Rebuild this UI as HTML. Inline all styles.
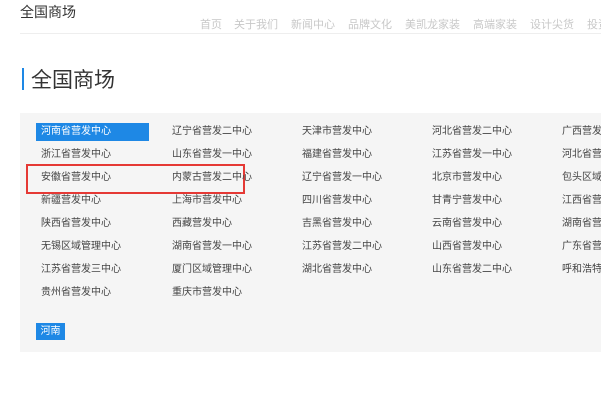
<!DOCTYPE html>
<html><head><meta charset="utf-8"><style>
html,body{margin:0;width:601px;height:401px;overflow:hidden}
body{background:#fff;font-family:"Liberation Sans","Noto Sans CJK SC",sans-serif;position:relative}
#w{position:absolute;left:0;top:0;width:601px;height:401px;overflow:hidden}
.a{position:absolute;white-space:nowrap}
.n{position:absolute;top:16px;font-size:11px;color:#c8c8c8;white-space:nowrap}
.c{position:absolute;font-size:10px;color:#444;white-space:nowrap;line-height:14px}
</style></head><body><div id="w">
<div class="a" style="left:20px;top:2px;font-size:14px;color:#333">全国商场</div>
<div class="n" style="left:200px">首页</div>
<div class="n" style="left:234px">关于我们</div>
<div class="n" style="left:291px">新闻中心</div>
<div class="n" style="left:348px">品牌文化</div>
<div class="n" style="left:405px">美凯龙家装</div>
<div class="n" style="left:473px">高端家装</div>
<div class="n" style="left:530px">设计尖货</div>
<div class="n" style="left:587px">投资</div>
<div class="a" style="left:20px;top:33px;width:581px;height:1px;background:#eee"></div>
<div class="a" style="left:22px;top:68px;width:2px;height:22px;background:#1e88e5"></div>
<div class="a" style="left:31px;top:64px;font-size:21px;color:#333">全国商场</div>
<div class="a" style="left:20px;top:113px;width:581px;height:239px;background:#f5f5f5"></div>
<div class="a" style="left:36px;top:123px;width:113px;height:18px;background:#1e88e5"></div>
<div class="a" style="left:26px;top:164px;width:215px;height:26px;border:2px solid #e53935"></div>
<div class="a" style="left:36px;top:323px;width:29px;height:17px;background:#1e88e5;color:#fff;font-size:10px;text-align:center;line-height:17px">河南</div>
<div id="g"></div>
</div>
<script>
var d=[["河南省营发中心","辽宁省营发二中心","天津市营发中心","河北省营发二中心","广西营发中心"],
["浙江省营发中心","山东省营发一中心","福建省营发中心","江苏省营发一中心","河北省营发一中心"],
["安徽省营发中心","内蒙古营发二中心","辽宁省营发一中心","北京市营发中心","包头区域管理中心"],
["新疆营发中心","上海市营发中心","四川省营发中心","甘青宁营发中心","江西省营发中心"],
["陕西省营发中心","西藏营发中心","吉黑省营发中心","云南省营发中心","湖南省营发二中心"],
["无锡区域管理中心","湖南省营发一中心","江苏省营发二中心","山西省营发中心","广东省营发中心"],
["江苏省营发三中心","厦门区域管理中心","湖北省营发中心","山东省营发二中心","呼和浩特区域中心"],
["贵州省营发中心","重庆市营发中心"]];
var xs=[41,172,302,432,562],h="";
d.forEach(function(r,i){r.forEach(function(t,j){h+='<div class="c" style="left:'+xs[j]+'px;top:'+(125+i*23)+'px;'+(i==0&&j==0?'color:#fff':'')+'">'+t+'</div>';});});
document.getElementById('g').innerHTML=h;
</script>
</body></html>
